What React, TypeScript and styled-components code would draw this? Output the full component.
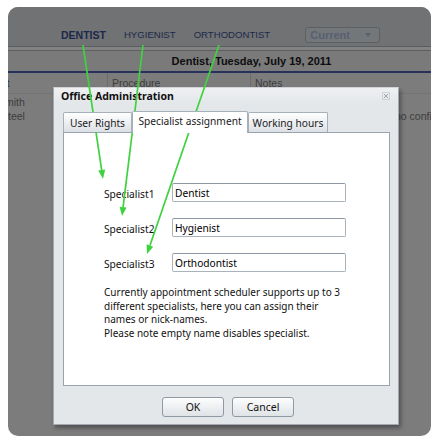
import React from 'react';
import styled, { createGlobalStyle } from 'styled-components';

const GlobalStyle = createGlobalStyle`
  html, body {
    margin: 0;
    padding: 0;
    background: #ffffff;
  }
  body {
    font-family: "Noto Sans", "DejaVu Sans", sans-serif;
  }
`;

const Page = styled.div`
  position: relative;
  width: 438px;
  height: 440px;
  padding: 7px 7px 4px 8px;
  box-sizing: border-box;
  overflow: hidden;
`;

const Frame = styled.div`
  position: relative;
  height: 100%;
  display: flex;
  flex-direction: column;
  border-radius: 10px;
  overflow: hidden;
  background: #7c7c7c;
  font-family: "Liberation Sans", Arial, sans-serif;
`;

const TopBar = styled.div`
  flex: none;
  height: 39px;
  box-sizing: border-box;
  display: flex;
  align-items: center;
  gap: 18px;
  padding: 16px 0 0 53px;
  background: #707274;
`;

const NavItem = styled.span<{ $active?: boolean }>`
  font-size: ${p => (p.$active ? 10.5 : 9.6)}px;
  font-weight: ${p => (p.$active ? 700 : 400)};
  color: #1c294a;
`;

const Dropdown = styled.div`
  margin-left: 17px;
  width: 75px;
  height: 16px;
  box-sizing: border-box;
  display: flex;
  align-items: center;
  justify-content: space-between;
  padding: 0 8px 0 4px;
  border: 1px solid #5d6063;
  border-radius: 3px;
  background: #74777a;
  font-size: 11px;
  font-weight: 700;
  color: #566072;
`;

const DropArrow = styled.span`
  width: 0;
  height: 0;
  border-left: 3px solid transparent;
  border-right: 3px solid transparent;
  border-top: 4px solid #566072;
`;

const DoubleRule = styled.div`
  flex: none;
  height: 5px;
  box-sizing: border-box;
  border-top: 1px solid #5b5d5f;
  border-bottom: 1px solid #5b5d5f;
  background: #808284;
`;

const DateBar = styled.div`
  flex: none;
  height: 20px;
  display: flex;
  align-items: center;
  justify-content: center;
  padding-left: 64px;
  background: #7a7a7a;
  font-size: 11px;
  font-weight: 700;
  color: #0d0d0d;
`;

const NavyLine = styled.div`
  flex: none;
  height: 2px;
  background: #27315c;
`;

const GridRow = styled.div<{ $header?: boolean }>`
  flex: none;
  display: grid;
  grid-template-columns: 100px 143px 1fr;
  height: ${p => (p.$header ? '20px' : '14px')};
  border-bottom: ${p => (p.$header ? '1px solid #747474' : 'none')};
  font-size: 10.5px;
  color: #3d3d3d;
`;

const Cell = styled.div<{ $divider?: boolean; $indent?: number }>`
  display: flex;
  align-items: center;
  overflow: hidden;
  white-space: nowrap;
  padding-left: ${p => p.$indent ?? 4}px;
  border-right: ${p => (p.$divider ? '1px solid #6c6c6c' : 'none')};
`;

const Clipped = styled.span<{ $shift: number }>`
  margin-left: ${p => -p.$shift}px;
`;

const RowsGap = styled.div`
  flex: none;
  height: 1px;
`;

const Dialog = styled.div`
  position: absolute;
  left: 45px;
  top: 80px;
  width: 346px;
  height: 338px;
  box-sizing: border-box;
  display: flex;
  flex-direction: column;
  background: #e4e7ea;
  border: 1px solid #a2a8ae;
  border-top-color: #d0d4d8;
  box-shadow: 2px 3px 4px rgba(0, 0, 0, 0.35);
  font-family: "Noto Sans", "DejaVu Sans", sans-serif;
  color: #111;
`;

const TitleBar = styled.div`
  flex: none;
  height: 15px;
  display: flex;
  align-items: center;
  justify-content: space-between;
  padding: 0 8px 0 7px;
  background: linear-gradient(#eef0f2, #e4e7ea);
  font-size: 10.5px;
  font-weight: 700;
`;

const CloseIcon = styled.svg`
  width: 8px;
  height: 8px;
`;

const Body = styled.div`
  display: flex;
  flex-direction: column;
  padding: 8px 8px 0 9px;
`;

const TabStrip = styled.div`
  position: relative;
  z-index: 1;
  height: 21px;
  display: flex;
  align-items: flex-end;
`;

const Tab = styled.div<{ $active?: boolean; $width: number }>`
  width: ${p => p.$width}px;
  height: ${p => (p.$active ? 22 : 20)}px;
  margin-bottom: ${p => (p.$active ? -1 : 0)}px;
  box-sizing: border-box;
  display: flex;
  align-items: center;
  justify-content: center;
  padding-bottom: ${p => (p.$active ? 3 : 0)}px;
  border: 1px solid #a6b0b9;
  border-bottom: none;
  border-radius: 2px 2px 0 0;
  background: ${p =>
    p.$active ? '#ffffff' : 'linear-gradient(#ffffff, #dce0e5)'};
  font-size: 10.2px;
  color: #1a1a1a;
  white-space: nowrap;
`;

const Panel = styled.div`
  height: 254px;
  box-sizing: border-box;
  padding: 50px 0 0 40px;
  border: 1px solid #97a3ae;
  background: #ffffff;
`;

const FieldRow = styled.div`
  display: flex;
  align-items: center;
  height: 19px;
  & + & {
    margin-top: 16px;
  }
`;

const Label = styled.label`
  width: 68px;
  padding-top: 2px;
  font-size: 10.2px;
`;

const TextInput = styled.input`
  width: 174px;
  height: 19px;
  box-sizing: border-box;
  padding: 0 2px;
  border: 1px solid #aab3bc;
  border-top-color: #8d97a2;
  border-radius: 2px;
  background: #ffffff;
  font-family: inherit;
  font-size: 10.2px;
  color: #000;
  outline: none;
`;

const Note = styled.p`
  margin: 14px 0 0;
  font-size: 10px;
  line-height: 13.5px;
  white-space: nowrap;
`;

const Footer = styled.div`
  display: flex;
  justify-content: center;
  gap: 8px;
  padding: 11px 0 0 3px;
`;

const Button = styled.button`
  width: 62px;
  height: 20px;
  padding: 0;
  border: 1px solid #8e99a4;
  border-radius: 3px;
  background: linear-gradient(#fdfdfd, #dfe3e7);
  font-family: inherit;
  font-size: 10.5px;
  color: #111;
`;

const Overlay = styled.svg`
  position: absolute;
  left: 0;
  top: 0;
  width: 438px;
  height: 440px;
  pointer-events: none;
`;

type Arrow = { x1: number; y1: number; x2: number; y2: number };

const arrows: Arrow[] = [
  { x1: 83, y1: 45, x2: 103, y2: 179 },
  { x1: 143, y1: 45, x2: 122, y2: 216 },
  { x1: 219, y1: 45, x2: 147, y2: 254 },
];

function arrowParts(a: Arrow) {
  const dx = a.x2 - a.x1;
  const dy = a.y2 - a.y1;
  const len = Math.hypot(dx, dy);
  const ux = dx / len;
  const uy = dy / len;
  const bx = a.x2 - ux * 9;
  const by = a.y2 - uy * 9;
  const head = `${a.x2},${a.y2} ${bx - uy * 3.5},${by + ux * 3.5} ${
    bx + uy * 3.5
  },${by - ux * 3.5}`;
  return { bx, by, head };
}

const specialists = ['Dentist', 'Hygienist', 'Orthodontist'];

const noteLines = [
  'Currently appointment scheduler supports up to 3',
  'different specialists, here you can assign their',
  'names or nick-names.',
  'Please note empty name disables specialist.',
];

export default function App() {
  return (
    <Page>
      <GlobalStyle />
      <Frame>
        <TopBar>
          <NavItem $active>DENTIST</NavItem>
          <NavItem>HYGIENIST</NavItem>
          <NavItem>ORTHODONTIST</NavItem>
          <Dropdown>
            Current
            <DropArrow />
          </Dropdown>
        </TopBar>
        <DoubleRule />
        <DateBar>Dentist, Tuesday, July 19, 2011</DateBar>
        <NavyLine />
        <GridRow $header>
          <Cell $divider $indent={0}>
            <Clipped $shift={31}>Patient</Clipped>
          </Cell>
          <Cell $divider>Procedure</Cell>
          <Cell>Notes</Cell>
        </GridRow>
        <RowsGap />
        <GridRow>
          <Cell $indent={0}>
            <Clipped $shift={10}>Smith</Clipped>
          </Cell>
          <Cell />
          <Cell />
        </GridRow>
        <GridRow>
          <Cell $indent={0}>
            <Clipped $shift={7}>Steel</Clipped>
          </Cell>
          <Cell />
          <Cell $indent={150}>
            <Clipped $shift={6}>no confirmation</Clipped>
          </Cell>
        </GridRow>

        <Dialog>
          <TitleBar>
            Office Administration
            <CloseIcon viewBox="0 0 8 8">
              <rect x="0.5" y="0.5" width="7" height="7" fill="none" stroke="#b4b9be" strokeDasharray="1 1" />
              <path d="M2 2 L6 6 M6 2 L2 6" stroke="#9ca2a8" strokeWidth="1" />
            </CloseIcon>
          </TitleBar>
          <Body>
            <TabStrip>
              <Tab $width={69}>User Rights</Tab>
              <Tab $width={116} $active>
                Specialist assignment
              </Tab>
              <Tab $width={80}>Working hours</Tab>
            </TabStrip>
            <Panel>
              {specialists.map((name, i) => (
                <FieldRow key={name}>
                  <Label>Specialist{i + 1}</Label>
                  <TextInput defaultValue={name} />
                </FieldRow>
              ))}
              <Note>
                {noteLines.map((line, i) => (
                  <React.Fragment key={line}>
                    {i > 0 && <br />}
                    {line}
                  </React.Fragment>
                ))}
              </Note>
            </Panel>
            <Footer>
              <Button>OK</Button>
              <Button>Cancel</Button>
            </Footer>
          </Body>
        </Dialog>
      </Frame>

      <Overlay viewBox="0 0 438 440">
        {arrows.map(a => {
          const { bx, by, head } = arrowParts(a);
          return (
            <g key={a.x1}>
              <line x1={a.x1} y1={a.y1} x2={bx} y2={by} stroke="#3fd23f" strokeWidth={1.7} />
              <polygon points={head} fill="#3fd23f" />
            </g>
          );
        })}
      </Overlay>
    </Page>
  );
}
